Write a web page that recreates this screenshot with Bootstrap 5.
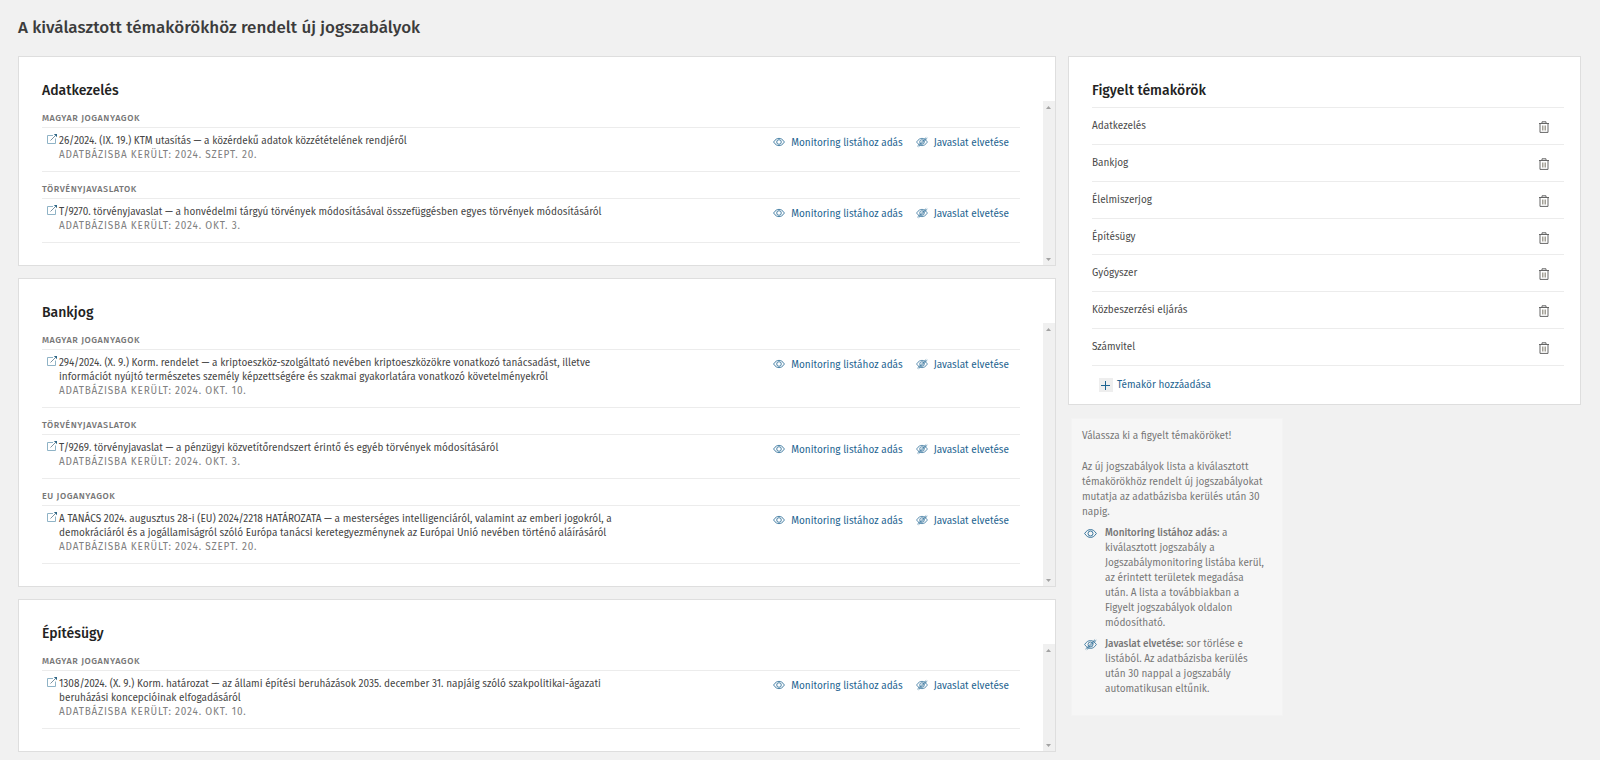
<!DOCTYPE html>
<html lang="hu">
<head>
<meta charset="utf-8">
<meta name="viewport" content="width=device-width, initial-scale=1">
<title>Jogszabálymonitoring</title>
<link href="https://cdn.jsdelivr.net/npm/bootstrap@5.3.0/dist/css/bootstrap.min.css" rel="stylesheet">
<style>
  body { background: #f1f1f1; color: #4a4a4a; font-family: "Fira Sans", Roboto, "Noto Sans", sans-serif; font-size: 10px; line-height: 14px; }
  .page { padding: 16px 19px 6px 18px; }
  .page-title { font-size: 17px; line-height: 24px; font-weight: 500; color: #3c3c3c; margin-bottom: 16px; }
  .panels { --bs-gutter-x: 12px; }
  .panel-stack { gap: 12px; }
  .panel { background: #fff; border: 1px solid #dedede; }
  .panel-title { font-size: 14px; line-height: 20px; font-weight: 500; color: #222; margin: 0; padding: 24px 23px 0; }
  .topic-body { padding: 0 23px 22px 23px; }
  .group-title { font-size: 9px; line-height: 14px; font-weight: 500; letter-spacing: .06em; text-transform: uppercase; color: #777; margin: 0; padding: 10px 0 2px; border-bottom: 1px solid #ececec; }
  .law { padding: 6px 0 9px 5px; border-bottom: 1px solid #ececec; }
  .law-text { max-width: 582px; }
  .law-text svg { width: 10px; height: 10px; margin: 0 2px 0 0; }
  .law-link { color: #444; }
  .law-date { letter-spacing: .08em; text-transform: uppercase; color: #808080; }
  .actions { gap: 13px; padding: 2px 11px 0 0; }
  .act { color: #1d6390; gap: 6px; }
  .scroll-rail { width: 12px; background: #f0f0f0; padding: 5px 0 4px; }
  .scroll-rail svg { width: 5px; height: 3px; fill: #a3a3a3; }
  .watch-list { margin: 6px 16px 0 23px; height: 259px; display: grid; grid-auto-rows: 1fr; border-top: 1px solid #ececec; }
  .watch-list li { padding: 11px 15px 0 0; border-bottom: 1px solid #ececec; }
  .trash { border: 0; background: none; padding: 2px 0 0; line-height: 0; height: 14px; }
  .add-row { padding: 12px 0 12px 30px; }
  .add-row .act { gap: 4px; }
  .plus-box { width: 14px; height: 14px; background: #eee; }
  .hint { max-width: 212px; margin: 13px 0 0 3px; padding: 10px 14px 18px 10px; background: #f6f6f6; border: 1px solid #f3f3f3; color: #777; line-height: 15px; }
  .hint li { gap: 8px; margin-top: 6px; }
  .hint b { font-weight: 500; }
  .hint-icon { width: 13px; height: 15px; color: #1d6390; margin-left: 2px; }
</style>
</head>
<body>
<svg class="d-none" aria-hidden="true">
  <symbol id="i-eye" viewBox="0 0 12 10"><g fill="none" stroke="currentColor" stroke-width=".8"><path d="M.6 5C2.600 2 4.200 1.400 6 1.400S9.400 2 11.400 5C9.400 8 7.800 8.600 6 8.600S2.600 8 .6 5z"/><circle cx="6" cy="5" r="2.300"/></g></symbol>
  <symbol id="i-eye-off" viewBox="0 0 12 10"><g fill="none" stroke="currentColor" stroke-width=".7"><path d="M.6 5C2.600 2 4.200 1.400 6 1.400S9.400 2 11.400 5C9.400 8 7.800 8.600 6 8.600S2.600 8 .6 5z"/><circle cx="6" cy="5" r="2.300"/><path d="M1.400 9.200 10.200.5M2.600 9.700 11.300 1.100"/></g></symbol>
  <symbol id="i-out" viewBox="0 0 10 10"><g fill="none"><path d="M6 1.500H.5v8h8V4.500" stroke="#8fb3c6" stroke-width="1"/><path d="M3.500 6.500 8.500 1.500" stroke="#6d8796" stroke-width=".9"/><path d="M6.800 0H10V3.200z" fill="#2f6685"/></g></symbol>
  <symbol id="i-trash" viewBox="0 0 10 12"><g fill="none" stroke="#666"><path d="M0 2.500h10M3 2V.8h4V2"/><path d="M1 2.500v8.900h8V2.500"/><path d="M3.500 4.500v5M5 4.500v5M6.500 4.500v5" stroke="#99958a" stroke-width=".9"/></g></symbol>
  <symbol id="i-up" viewBox="0 0 5 3"><path d="M0 3 2.500 0 5 3z"/></symbol>
  <symbol id="i-down" viewBox="0 0 5 3"><path d="M0 0 2.500 3 5 0z"/></symbol>
</svg>

<main class="page container-fluid">
  <h1 class="page-title">A kiválasztott témakörökhöz rendelt új jogszabályok</h1>
  <div class="row panels">
    <div class="col-8 d-flex flex-column panel-stack" id="topics"></div>
    <div class="col-4">
      <section class="panel">
        <h2 class="panel-title">Figyelt témakörök</h2>
        <ul class="watch-list list-unstyled mb-0" id="watched"></ul>
        <div class="add-row"><a href="#" class="act d-flex align-items-center text-decoration-none"><span class="plus-box d-flex align-items-center justify-content-center"><svg width="9" height="9" viewBox="0 0 9 9"><path d="M4.500 0v9M0 4.500h9" stroke="#1d6390"/></svg></span>Témakör hozzáadása</a></div>
      </section>
      <aside class="hint">
        <p class="mb-3">Válassza ki a figyelt témaköröket!</p>
        <p class="mb-0">Az új jogszabályok lista a kiválasztott témakörökhöz rendelt új jogszabályokat mutatja az adatbázisba kerülés után 30 napig.</p>
        <ul class="list-unstyled mb-0">
          <li class="d-flex"><svg class="hint-icon flex-shrink-0"><use href="#i-eye"/></svg><span><b>Monitoring listához adás:</b> a kiválasztott jogszabály a Jogszabálymonitoring listába kerül, az érintett területek megadása után. A lista a továbbiakban a Figyelt jogszabályok oldalon módosítható.</span></li>
          <li class="d-flex"><svg class="hint-icon flex-shrink-0"><use href="#i-eye-off"/></svg><span><b>Javaslat elvetése:</b> sor törlése e listából. Az adatbázisba kerülés után 30 nappal a jogszabály automatikusan eltűnik.</span></li>
        </ul>
      </aside>
    </div>
  </div>
</main>

<script src="https://cdn.jsdelivr.net/npm/bootstrap@5.3.0/dist/js/bootstrap.bundle.min.js"></script>
<script>
const topics = [
  ['Adatkezelés', [
    ['Magyar joganyagok', '26/2024. (IX. 19.) KTM utasítás — a közérdekű adatok közzétételének rendjéről', '2024. szept. 20.'],
    ['Törvényjavaslatok', 'T/9270. törvényjavaslat — a honvédelmi tárgyú törvények módosításával összefüggésben egyes törvények módosításáról', '2024. okt. 3.']]],
  ['Bankjog', [
    ['Magyar joganyagok', '294/2024. (X. 9.) Korm. rendelet — a kriptoeszköz-szolgáltató nevében kriptoeszközökre vonatkozó tanácsadást, illetve információt nyújtó természetes személy képzettségére és szakmai gyakorlatára vonatkozó követelményekről', '2024. okt. 10.'],
    ['Törvényjavaslatok', 'T/9269. törvényjavaslat — a pénzügyi közvetítőrendszert érintő és egyéb törvények módosításáról', '2024. okt. 3.'],
    ['EU joganyagok', 'A TANÁCS 2024. augusztus 28-i (EU) 2024/2218 HATÁROZATA — a mesterséges intelligenciáról, valamint az emberi jogokról, a demokráciáról és a jogállamiságról szóló Európa tanácsi keretegyezménynek az Európai Unió nevében történő aláírásáról', '2024. szept. 20.']]],
  ['Építésügy', [
    ['Magyar joganyagok', '1308/2024. (X. 9.) Korm. határozat — az állami építési beruházások 2035. december 31. napjáig szóló szakpolitikai-ágazati beruházási koncepcióinak elfogadásáról', '2024. okt. 10.']]]
];
const action = (icon, text) => `<a href="#" class="act d-flex text-decoration-none"><svg width="12" height="12"><use href="#${icon}"/></svg>${text}</a>`;
const group = ([kind, text, date]) => `
  <h3 class="group-title">${kind}</h3>
  <div class="law d-flex justify-content-between">
    <div class="law-text d-flex"><svg class="flex-shrink-0"><use href="#i-out"/></svg>
      <div><a href="#" class="law-link text-decoration-none">${text}</a><div class="law-date">Adatbázisba került: ${date}</div></div></div>
    <div class="actions d-flex flex-shrink-0">${action('i-eye', 'Monitoring listához adás')}${action('i-eye-off', 'Javaslat elvetése')}</div>
  </div>`;
document.getElementById('topics').innerHTML = topics.map(([name, groups]) => `
  <section class="panel">
    <h2 class="panel-title">${name}</h2>
    <div class="d-flex">
      <div class="topic-body flex-grow-1">${groups.map(group).join('')}</div>
      <div class="scroll-rail d-flex flex-column justify-content-between align-items-center" aria-hidden="true"><svg><use href="#i-up"/></svg><svg><use href="#i-down"/></svg></div>
    </div>
  </section>`).join('');
document.getElementById('watched').innerHTML =
  ['Adatkezelés', 'Bankjog', 'Élelmiszerjog', 'Építésügy', 'Gyógyszer', 'Közbeszerzési eljárás', 'Számvitel'].map(t =>
  `<li class="d-flex justify-content-between"><span>${t}</span><button type="button" class="trash" aria-label="${t} törlése"><svg width="10" height="12"><use href="#i-trash"/></svg></button></li>`).join('');
</script>
</body>
</html>
